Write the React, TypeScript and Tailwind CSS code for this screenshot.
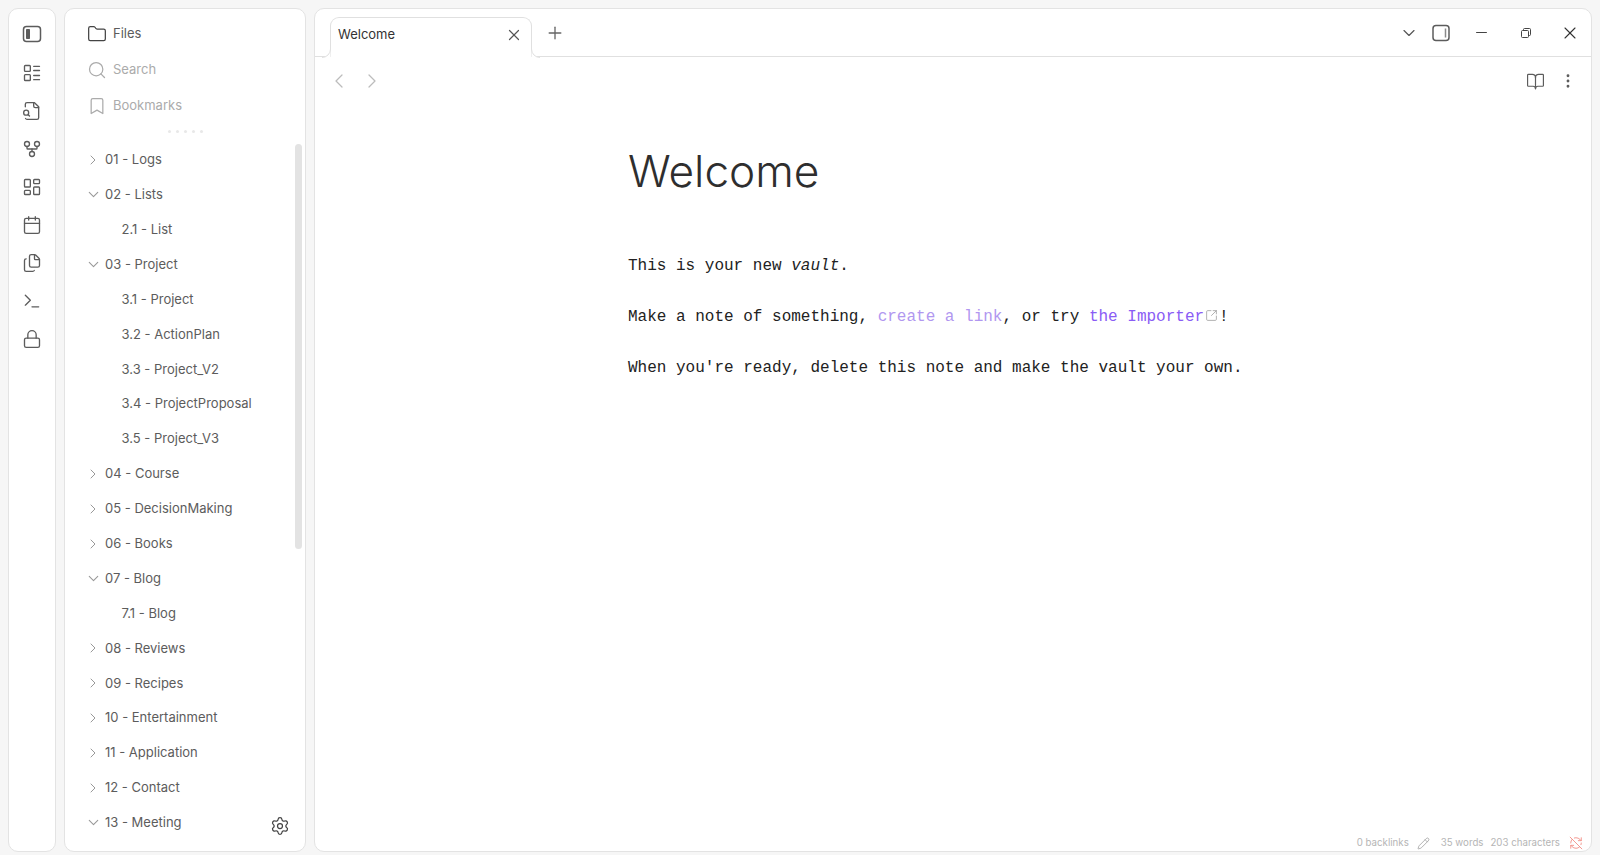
import React from "react";
import {
  BookOpen, Bookmark, Calendar, ChevronDown, ChevronLeft, ChevronRight, EllipsisVertical, Files, Folder,
  GitFork, LayoutDashboard, LayoutList, Lock, Minus, Pencil, Plus, RefreshCwOff, Search, Settings,
  SquareArrowOutUpRight, Terminal, X,
} from "lucide-react";

type Row = { label: string; kind: "closed" | "open" | "child" };
const rows: Row[] = [
  { label: "01 - Logs", kind: "closed" },
  { label: "02 - Lists", kind: "open" },
  { label: "2.1 - List", kind: "child" },
  { label: "03 - Project", kind: "open" },
  { label: "3.1 - Project", kind: "child" },
  { label: "3.2 - ActionPlan", kind: "child" },
  { label: "3.3 - Project_V2", kind: "child" },
  { label: "3.4 - ProjectProposal", kind: "child" },
  { label: "3.5 - Project_V3", kind: "child" },
  { label: "04 - Course", kind: "closed" },
  { label: "05 - DecisionMaking", kind: "closed" },
  { label: "06 - Books", kind: "closed" },
  { label: "07 - Blog", kind: "open" },
  { label: "7.1 - Blog", kind: "child" },
  { label: "08 - Reviews", kind: "closed" },
  { label: "09 - Recipes", kind: "closed" },
  { label: "10 - Entertainment", kind: "closed" },
  { label: "11 - Application", kind: "closed" },
  { label: "12 - Contact", kind: "closed" },
  { label: "13 - Meeting", kind: "open" },
];

function PanelLeft() {
  return (
    <svg width="20" height="20" viewBox="0 0 20 20" fill="none" stroke="#5c5c5c" strokeWidth="1.5">
      <rect x="1.5" y="2.5" width="17" height="15" rx="3" />
      <rect x="4" y="5" width="4" height="10" rx="0.75" fill="#5c5c5c" stroke="none" />
    </svg>
  );
}

function PanelRight() {
  return (
    <svg width="18" height="18" viewBox="0 0 18 18" fill="none" stroke="#5c5c5c" strokeWidth="1.5">
      <rect x="1" y="1.5" width="16" height="15" rx="3" />
      <path d="M13.5 4.5v9" stroke="#8a8a8a" />
    </svg>
  );
}

function Restore() {
  return (
    <svg width="12" height="12" viewBox="0 0 12 12" fill="none" stroke="#444" strokeWidth="1">
      <rect x="1.5" y="3.5" width="7" height="7" rx="1" />
      <path d="M3.5 3.5V2.5a1 1 0 0 1 1-1h5a1 1 0 0 1 1 1v5a1 1 0 0 1-1 1h-1" />
    </svg>
  );
}

function FileSearchOld({ size, strokeWidth }: { size: number; strokeWidth: number }) {
  return (
    <svg width={size} height={size} viewBox="0 0 24 24" fill="none" stroke="currentColor" strokeWidth={strokeWidth} strokeLinecap="round" strokeLinejoin="round">
      <path d="M14 2v4a2 2 0 0 0 2 2h4" />
      <path d="M4.268 21a2 2 0 0 0 1.727 1H18a2 2 0 0 0 2-2V7l-5-5H6a2 2 0 0 0-2 2v3" />
      <path d="m9 18-1.5-1.5" />
      <circle cx="5" cy="14" r="3" />
    </svg>
  );
}

const ribbon = [LayoutList, FileSearchOld, GitFork, LayoutDashboard, Calendar, Files, Terminal, Lock];

function Flare({ side }: { side: "left" | "right" }) {
  return side === "left" ? (
    <svg width="9" height="10" viewBox="0 0 9 10" className="absolute -left-[9px] -bottom-px">
      <path d="M0 9.5A8.5 8.5 0 0 0 8.5 1V10H0Z" fill="#fff" />
      <path d="M0 9.5A8.5 8.5 0 0 0 8.5 1" fill="none" stroke="#e0e0e0" />
    </svg>
  ) : (
    <svg width="9" height="10" viewBox="0 0 9 10" className="absolute -right-[9px] -bottom-px">
      <path d="M9 9.5A8.5 8.5 0 0 1 .5 1V10H9Z" fill="#fff" />
      <path d="M9 9.5A8.5 8.5 0 0 1 .5 1" fill="none" stroke="#e0e0e0" />
    </svg>
  );
}

export default function App() {
  return (
    <div className="flex h-[855px] w-[1600px] overflow-hidden bg-[#f6f6f6] pb-[3px] pl-[8px] pr-[8px] pt-[8px] font-['Inter',sans-serif]">
      <nav className="flex w-[48px] shrink-0 flex-col items-center rounded-[10px] border border-[#e3e3e3] bg-white pt-[7px]">
        <div className="-mt-px mb-px flex h-[38px] shrink-0 items-center justify-center"><PanelLeft /></div>
        {ribbon.map((Icon, i) => (
          <div key={i} className="flex h-[38px] shrink-0 items-center justify-center text-[#5c5c5c]">
            <Icon size={20} strokeWidth={1.6} />
          </div>
        ))}
      </nav>

      <aside className="relative ml-[8px] flex w-[242px] shrink-0 flex-col overflow-hidden rounded-[10px] border border-[#e3e3e3] bg-white pt-[7px]">
        <div className="flex h-[36px] shrink-0 items-center gap-[6px] pl-[22px] text-[13px] text-[#5c5c5c]">
          <Folder size={20} strokeWidth={1.5} className="text-[#444]" />
          <span>Files</span>
        </div>
        <div className="flex h-[36px] shrink-0 items-center gap-[6px] pl-[22px] text-[13px] text-[#ababab]">
          <Search size={20} strokeWidth={1.5} />
          <span>Search</span>
        </div>
        <div className="flex h-[36px] shrink-0 items-center gap-[6px] pl-[22px] text-[13px] text-[#ababab]">
          <Bookmark size={20} strokeWidth={1.5} />
          <span>Bookmarks</span>
        </div>
        <div className="mt-[4px] flex h-[6px] shrink-0 items-center justify-center gap-[5px]">
          {[0, 1, 2, 3, 4].map((d) => (
            <span key={d} className="h-[3px] w-[3px] rounded-full bg-[#e8e8e8]" />
          ))}
        </div>
        <div className="mt-[8.5px] flex flex-col">
          {rows.map((r) => (
            <div key={r.label} className="flex h-[34.9px] shrink-0 items-center text-[13px] text-[#5c5c5c]">
              {r.kind === "child" ? (
                <span className="pl-[56.5px]">{r.label}</span>
              ) : (
                <>
                  {r.kind === "open" ? (
                    <span className="flex w-[40px] shrink-0 justify-end pr-[3.5px] text-[#999]">
                      <ChevronDown size={17} strokeWidth={1.5} />
                    </span>
                  ) : (
                    <span className="flex w-[40px] shrink-0 justify-end pr-[4px] text-[#999]">
                      <ChevronRight size={16} strokeWidth={1.5} />
                    </span>
                  )}
                  <span>{r.label}</span>
                </>
              )}
            </div>
          ))}
        </div>
        <span className="absolute left-[230px] top-[135px] h-[405px] w-[7px] rounded bg-[#e3e3e3]" />
        <Settings size={20} strokeWidth={1.5} className="absolute left-[205px] top-[807px] text-[#444]" />
      </aside>

      <main className="ml-[8px] flex min-w-0 flex-1 flex-col overflow-hidden rounded-[10px] border border-[#e3e3e3] bg-white">
        <header className="flex h-[48px] shrink-0 items-end border-b border-[#e0e0e0] pl-[15px] pr-[11px]">
          <div className="relative -mb-px flex h-[40px] w-[202px] items-center justify-between rounded-t-[9px] border-x border-t border-[#e0e0e0] bg-white pb-[6px] pl-[7px] pr-[8px] text-[13px] text-[#333]">
            <Flare side="left" />
            <span>Welcome</span>
            <X size={18} strokeWidth={1.6} className="text-[#555]" />
            <Flare side="right" />
          </div>
          <div className="ml-[13px] flex h-[47px] items-center text-[#666]">
            <Plus size={20} strokeWidth={1.6} />
          </div>
          <div className="ml-auto flex h-[47px] items-center text-[#555]">
            <ChevronDown size={20} strokeWidth={1.4} />
            <span className="ml-[13px] flex items-center"><PanelRight /></span>
            <Minus size={17} strokeWidth={1.3} className="ml-[22.5px] text-[#333]" />
            <span className="ml-[30.5px]"><Restore /></span>
            <X size={20} strokeWidth={1.3} className="ml-[28px] text-[#333]" />
          </div>
        </header>

        <div className="flex h-[48px] shrink-0 items-center justify-between pl-[12px] pr-[14px] text-[#bcbcbc]">
          <div className="flex items-center gap-[9px]">
            <ChevronLeft size={24} strokeWidth={1.25} />
            <ChevronRight size={24} strokeWidth={1.25} />
          </div>
          <div className="flex items-center gap-[14px] text-[#5c5c5c]">
            <BookOpen size={19} strokeWidth={1.5} />
            <EllipsisVertical size={18} strokeWidth={1.8} />
          </div>
        </div>

        <article className="ml-[313px] flex-1">
          <h1 className="mt-[38px] text-[44.2px] font-light leading-[56px] text-[#2e2e2e]">Welcome</h1>
          <div className="mt-[55px] font-['Liberation_Mono',monospace] text-[16px] leading-[24px] text-[#222]">
            <p>This is your new <em>vault</em>.</p>
            <p className="mt-[27px]">
              Make a note of something, <span className="text-[#b197f0]">create a link</span>, or try{" "}
              <span className="text-[#8a5cf5]">the Importer</span>
              <SquareArrowOutUpRight size={13} strokeWidth={1.4} className="mx-px -mt-[2px] inline text-[#999]" />!
            </p>
            <p className="mt-[27px]">When you're ready, delete this note and make the vault your own.</p>
          </div>
        </article>

        <footer className="flex h-[20px] shrink-0 items-center justify-end pr-[8px] pt-[4px] text-[9.7px] text-[#b5b5b5]">
          <span>0 backlinks</span>
          <Pencil size={13} strokeWidth={1.4} className="ml-[8.5px] text-[#9a9a9a]" />
          <span className="ml-[10.5px]">35 words</span>
          <span className="ml-[7px]">203 characters</span>
          <RefreshCwOff size={14} strokeWidth={1.5} className="ml-[9px] text-[#f28b82]" />
        </footer>
      </main>
    </div>
  );
}
